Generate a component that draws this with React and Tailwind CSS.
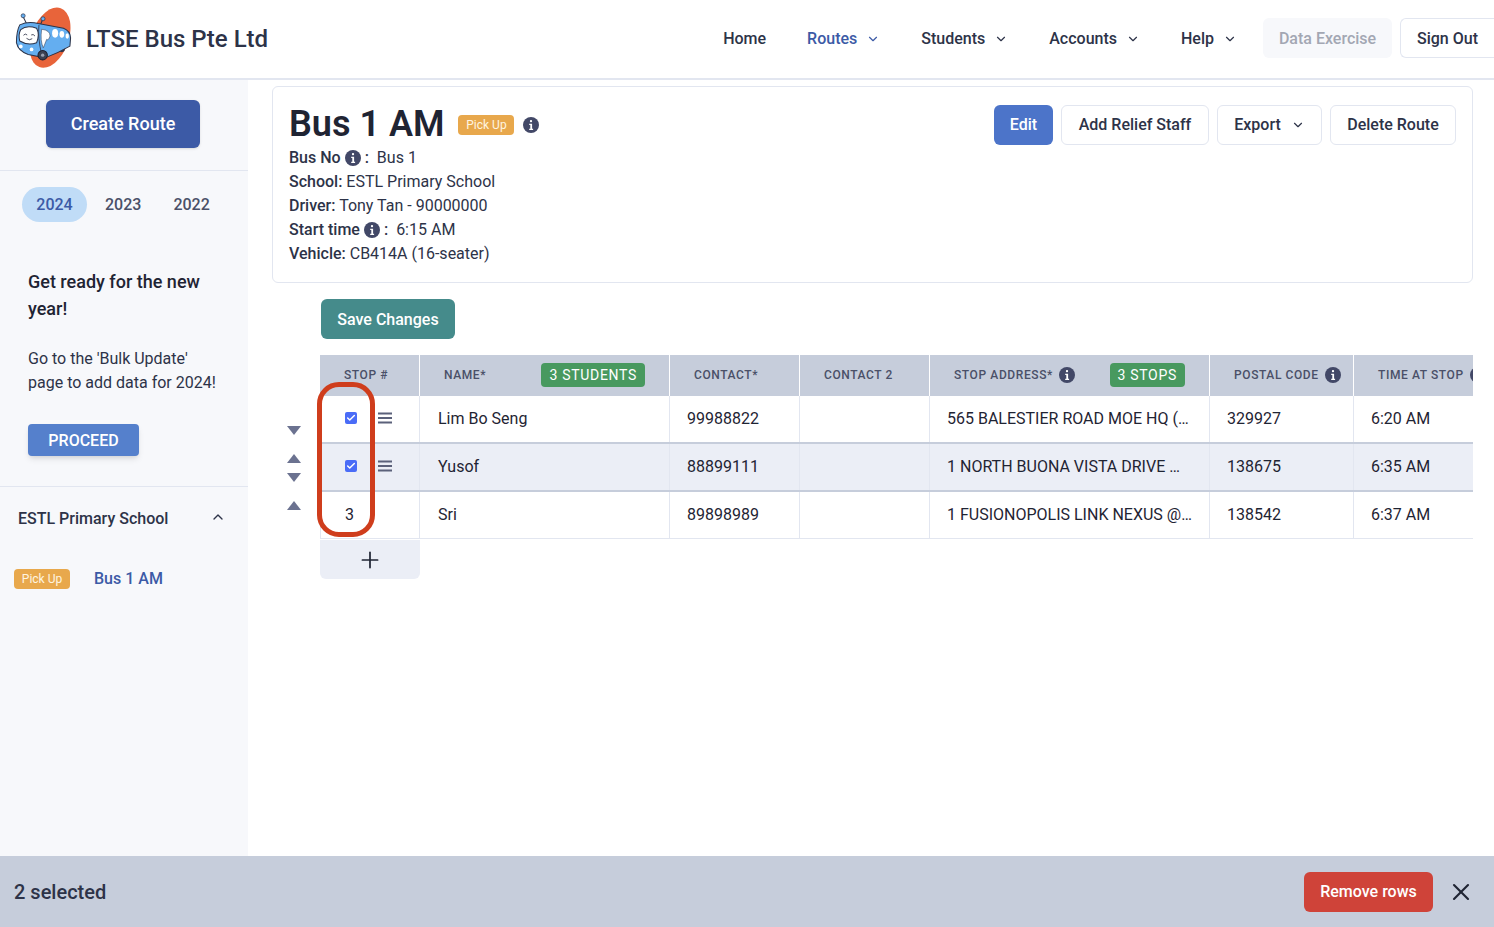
import { ChevronDown, ChevronUp, Plus, X, Check } from "lucide-react";

const rows = [
  { stop: 1, name: "Lim Bo Seng", contact: "99988822", address: "565 BALESTIER ROAD MOE HQ (…", postal: "329927", time: "6:20 AM", checked: true },
  { stop: 2, name: "Yusof", contact: "88899111", address: "1 NORTH BUONA VISTA DRIVE …", postal: "138675", time: "6:35 AM", checked: true },
  { stop: 3, name: "Sri", contact: "89898989", address: "1 FUSIONOPOLIS LINK NEXUS @…", postal: "138542", time: "6:37 AM", checked: false },
];

function InfoIcon({ size = 16 }) {
  return (
    <svg width={size} height={size} viewBox="0 0 16 16" className="shrink-0 inline-block">
      <circle cx="8" cy="8" r="8" fill="#424867" />
      <rect x="6.9" y="3" width="2.2" height="2.2" rx="1" fill="#fff" />
      <path d="M6.2 6.7h2.9v5h1v1.3H6.2v-1.3h1.1V8H6.2z" fill="#fff" />
    </svg>
  );
}

function Logo() {
  return (
    <svg width="70" height="68" viewBox="0 0 208 202" className="shrink-0 -mt-[2px]">
      <ellipse cx="125" cy="100" rx="55" ry="93" transform="rotate(20 125 100)" fill="#e8643a" />
      <path d="M55 58 L45 38 M97 60 L103 46" stroke="#2d3348" strokeWidth="3" />
      <circle cx="45" cy="35" r="6" fill="#64aef0" stroke="#2d3348" strokeWidth="2" />
      <circle cx="104" cy="44" r="6" fill="#64aef0" stroke="#2d3348" strokeWidth="2" />
      <circle cx="160" cy="134" r="9" fill="#2d3348" />
      <path d="M35 62 Q60 50 90 58 L165 72 Q185 80 186 100 L184 125 Q150 145 110 160 L60 150 Q30 140 25 115 Q25 80 35 62Z" fill="#64aef0" stroke="#2d3348" strokeWidth="3" />
      <path d="M38 76 Q55 62 85 72 Q95 90 85 115 Q60 125 35 110 Q30 90 38 76Z" fill="#fff" stroke="#2d3348" strokeWidth="3" />
      <path d="M92 62 Q88 100 100 150" fill="none" stroke="#2d3348" strokeWidth="2.5" />
      <path d="M100 75 Q125 78 125 95 Q120 110 115 105 L105 130 Q95 110 100 75Z" fill="#fff" stroke="#2d3348" strokeWidth="1.5" />
      <ellipse cx="140" cy="87" rx="9" ry="13" fill="#fff" />
      <ellipse cx="160" cy="90" rx="7" ry="10" fill="#fff" />
      <ellipse cx="176" cy="95" rx="5" ry="8" fill="#fff" />
      <circle cx="103" cy="152" r="14" fill="#3b4152" stroke="#1c2030" strokeWidth="3" />
      <circle cx="103" cy="152" r="5" fill="#9aa0b0" />
      <circle cx="38" cy="126" r="5.5" fill="#fff" />
      <circle cx="70" cy="135" r="5.5" fill="#fff" />
      <path d="M46 93 Q51 86 57 92 M69 92 Q75 88 80 95 M55 102 Q63 110 72 103" stroke="#2d3348" strokeWidth="2.5" fill="none" />
    </svg>
  );
}

function NavItem({ label, active, menu = true }) {
  return (
    <div className={`flex items-center text-base font-medium ${active ? "text-[#3c5aa6]" : "text-[#2d3348]"}`}>
      <span>{label}</span>
      {menu && <ChevronDown size={14} strokeWidth={2} className="ml-[9px]" />}
    </div>
  );
}

function Arrow({ up }) {
  return (
    <svg width="14" height="9" viewBox="0 0 14 9">
      <path d={up ? "M7 0 L14 9 L0 9Z" : "M0 0 L14 0 L7 9Z"} fill="#6b7290" />
    </svg>
  );
}

function DragHandle() {
  return (
    <svg width="14" height="12" viewBox="0 0 14 12" className="ml-[21px] -mt-[2px]">
      <path d="M0 0.6h14v1.8H0zM0 5.1h14v1.8H0zM0 9.6h14v1.8H0z" fill="#5b617a" />
    </svg>
  );
}

function HeadCell({ className, children }) {
  return (
    <div className={`flex items-center h-full pb-[2px] text-xs font-medium tracking-[0.05em] text-[#4a5068] border-r border-white ${className}`}>
      {children}
    </div>
  );
}

function GreenTag({ children, className }) {
  return (
    <span className={`h-6 px-2 flex items-center rounded-[4px] bg-[#48995f] text-white text-sm font-normal tracking-[0.05em] ${className}`}>
      {children}
    </span>
  );
}

function Row({ row }) {
  const cell = "h-full flex items-center border-r border-[#e2e6f0] text-base text-[#1f2433]";
  const rowBorder = row.stop === 3 ? "h-[47px] border-b border-[#e2e6f0]" : "h-12 border-b-2 border-[#c6cddb]";
  return (
    <div className={`flex ${rowBorder} ${row.stop === 2 ? "bg-[#ebeef6]" : "bg-white"}`}>
      <div className="w-[100px] h-full flex items-center shrink-0 border-x border-[#e2e6f0]">
        {row.checked ? (
          <>
            <span className="ml-[24px] -mt-[2px] w-3 h-3 rounded-[2px] bg-[#4a6cf7] flex items-center justify-center">
              <Check size={10} strokeWidth={3.5} className="text-white" />
            </span>
            <DragHandle />
          </>
        ) : (
          <span className="ml-[24px] text-base text-[#1f2433]">{row.stop}</span>
        )}
      </div>
      <div className={`${cell} w-[250px] pl-[18px] shrink-0`}>{row.name}</div>
      <div className={`${cell} w-[130px] pl-[17px] shrink-0`}>{row.contact}</div>
      <div className={`${cell} w-[130px] shrink-0`} />
      <div className={`${cell} w-[280px] pl-[17px] shrink-0 whitespace-nowrap`}>{row.address}</div>
      <div className={`${cell} w-[144px] pl-[17px] shrink-0`}>{row.postal}</div>
      <div className="h-full flex items-center text-base text-[#1f2433] pl-[17px] flex-1">{row.time}</div>
    </div>
  );
}

export default function App() {
  return (
    <div className="h-[927px] w-[1494px] overflow-hidden flex flex-col bg-white font-['Roboto',sans-serif] text-[#2d3348] relative">
      {/* Header */}
      <header className="h-[80px] shrink-0 border-b-2 border-[#e2e6f0] flex items-center pl-[8px]">
        <Logo />
        <div className="ml-[8px] text-2xl font-medium text-[#2d3348]">LTSE Bus Pte Ltd</div>
        <nav className="ml-auto flex items-center">
          <div className="flex items-center gap-[41px] mr-[26px]">
            <NavItem label="Home" menu={false} />
            <NavItem label="Routes" active />
            <NavItem label="Students" />
            <NavItem label="Accounts" />
            <NavItem label="Help" />
          </div>
          <div className="h-10 w-[129px] -mt-[2px] pt-px rounded-md bg-[#f7f8fb] text-[#a3a7b3] font-medium text-base flex items-center justify-center">Data Exercise</div>
          <div className="h-10 w-[94px] -mt-[2px] ml-2 pt-px rounded-l-md border border-[#e2e6f0] border-r-0 text-[#2d3348] font-medium text-base flex items-center pl-4">Sign Out</div>
        </nav>
      </header>

      <div className="flex flex-1 min-h-0">
        {/* Sidebar */}
        <aside className="w-[248px] shrink-0 bg-[#f7f8fb]">
          <div className="h-[91px] border-b border-[#e2e6f0] flex justify-center pt-5">
            <button className="w-[154px] h-12 rounded-md bg-[#3c5aa6] text-white font-medium text-lg shadow-sm -ml-[2px]">Create Route</button>
          </div>
          <div className="flex items-center h-[35px] mt-4 pl-[22px] font-medium text-base text-[#4a5068]">
            <span className="w-[65px] h-[35px] rounded-full bg-[#c0dcf7] text-[#3c5aa6] flex items-center justify-center">2024</span>
            <span className="ml-[18px]">2023</span>
            <span className="ml-8">2022</span>
          </div>
          <div className="h-[265px] border-b border-[#e2e6f0] px-7 pt-[46px]">
            <div className="text-lg font-medium leading-[27px] text-[#1f2433]">Get ready for the new year!</div>
            <div className="mt-[25px] text-base leading-[24px] text-[#2d3348]">Go to the 'Bulk Update' page to add data for 2024!</div>
            <button className="mt-[29px] w-[111px] h-8 pt-px rounded-[4px] bg-[#5580cc] text-white font-medium text-base shadow-md">PROCEED</button>
          </div>
          <div className="flex items-center justify-between h-[62px] pl-[18px] pr-[22px] text-base font-medium text-[#2d3348]">
            <span className="pt-px">ESTL Primary School</span>
            <ChevronUp size={16} strokeWidth={2} className="-mt-[2px]" />
          </div>
          <div className="flex items-center mt-[18px] pl-[14px]">
            <span className="h-5 w-14 rounded-[4px] bg-[#e8a84c] text-[#fff5e0] text-xs flex items-center justify-center">Pick Up</span>
            <span className="ml-6 text-base font-medium text-[#3c5aa6]">Bus 1 AM</span>
          </div>
        </aside>

        {/* Main */}
        <main className="flex-1 min-w-0 pl-[24px] pr-[21px] pt-[6px]">
          <section className="h-[197px] rounded-md border border-[#e2e6f0] flex justify-between pl-4 pr-4 pt-[18px]">
            <div>
              <div className="flex items-center h-[38px]">
                <h1 className="text-[36px] leading-none font-semibold text-[#1f2433]">Bus 1 AM</h1>
                <span className="ml-[14px] mt-[2px] h-5 w-14 rounded-[4px] bg-[#e8a84c] text-[#fff5e0] text-xs flex items-center justify-center">Pick Up</span>
                <span className="ml-[9px] mt-[2px] flex"><InfoIcon /></span>
              </div>
              <div className="mt-[3px] text-base leading-6 text-[#2d3348]">
                <div className="flex items-center"><b className="font-medium">Bus No</b><span className="mx-1 flex"><InfoIcon /></span><b className="font-medium">:</b><span className="ml-2">Bus 1</span></div>
                <div><b className="font-medium">School:</b> ESTL Primary School</div>
                <div><b className="font-medium">Driver:</b> Tony Tan - 90000000</div>
                <div className="flex items-center"><b className="font-medium">Start time</b><span className="mx-1 flex"><InfoIcon /></span><b className="font-medium">:</b><span className="ml-2">6:15 AM</span></div>
                <div><b className="font-medium">Vehicle:</b> CB414A (16-seater)</div>
              </div>
            </div>
            <div className="flex gap-2 items-start text-base font-medium">
              <button className="h-10 w-[59px] rounded-md bg-[#4c74c9] text-white">Edit</button>
              <button className="h-10 w-[148px] rounded-md border border-[#e2e6f0] bg-white">Add Relief Staff</button>
              <button className="h-10 w-[105px] rounded-md border border-[#e2e6f0] bg-white flex items-center justify-center gap-[10px]">Export<ChevronDown size={14} strokeWidth={2} /></button>
              <button className="h-10 w-[126px] rounded-md border border-[#e2e6f0] bg-white">Delete Route</button>
            </div>
          </section>

          <button className="mt-4 ml-[49px] h-10 w-[134px] pt-px rounded-md bg-[#458b8b] text-white font-medium text-base block">Save Changes</button>

          {/* Table */}
          <div className="mt-4 flex relative">
            <div className="w-[48px] shrink-0 pt-[71px] flex flex-col items-start pl-[15px]">
              <Arrow />
              <div className="mt-[19px]"><Arrow up /></div>
              <div className="mt-[10px]"><Arrow /></div>
              <div className="mt-[19px]"><Arrow up /></div>
            </div>
            <div className="flex-1 min-w-0 overflow-hidden">
              <div className="w-[1153px]">
                <div className="flex h-[41px] bg-[#c6cddb] whitespace-nowrap">
                  <HeadCell className="w-[100px] shrink-0 pl-6">STOP #</HeadCell>
                  <HeadCell className="w-[250px] shrink-0 pl-6 justify-between pr-6">NAME*<GreenTag>3 STUDENTS</GreenTag></HeadCell>
                  <HeadCell className="w-[130px] shrink-0 pl-6">CONTACT*</HeadCell>
                  <HeadCell className="w-[130px] shrink-0 pl-6">CONTACT 2</HeadCell>
                  <HeadCell className="w-[280px] shrink-0 pl-6">STOP ADDRESS*<span className="ml-[6px] flex"><InfoIcon /></span><GreenTag className="ml-auto mr-6">3 STOPS</GreenTag></HeadCell>
                  <HeadCell className="w-[144px] shrink-0 pl-6">POSTAL CODE<span className="ml-[6px] flex"><InfoIcon /></span></HeadCell>
                  <div className="flex items-center h-full pb-[2px] text-xs font-medium tracking-[0.05em] text-[#4a5068] pl-6 flex-1 overflow-hidden">TIME AT STOP<span className="ml-[6px] flex"><InfoIcon /></span></div>
                </div>
                {rows.map((row) => (
                  <Row key={row.stop} row={row} />
                ))}
                <button className="w-[100px] h-[39px] mt-px rounded-b-md bg-[#ebeef6] flex items-center justify-center text-[#1f2433]">
                  <Plus size={26} strokeWidth={1.6} />
                </button>
              </div>
            </div>
            {/* highlight drawn over the first column */}
            <div className="absolute left-[45px] top-[27px] w-[58px] h-[155px] rounded-[22px] border-[5px] border-[#cf3d1c]" />
          </div>
        </main>
      </div>

      {/* Selection bar */}
      <div className="absolute left-0 right-0 bottom-0 h-[71px] bg-[#c6cddb] flex items-center pl-[14px] pr-[19px]">
        <span className="text-xl font-medium text-[#2d3348]">2 selected</span>
        <button className="ml-auto h-10 w-[129px] pt-px rounded-md bg-[#cf4339] text-white font-medium text-base">Remove rows</button>
        <X size={28} strokeWidth={1.8} className="ml-[14px] text-[#1f2433]" />
      </div>
    </div>
  );
}
